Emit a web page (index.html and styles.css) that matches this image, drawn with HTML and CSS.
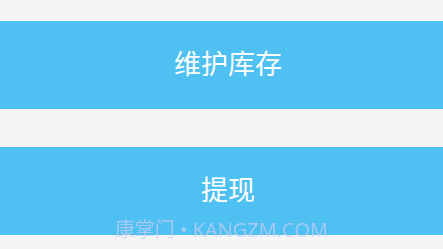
FILE: index.html
```html
<!DOCTYPE html>
<html lang="zh">
<head>
    <meta charset="UTF-8">
    <meta name="viewport" content="width=device-width, initial-scale=1.0">
    <title>维护库存</title>
    <link rel="stylesheet" href="styles.css">
</head>
<body>
    <div class="menu">
        <button class="menu-btn">维护库存</button>
        <button class="menu-btn">提现</button>
    </div>
    <div class="watermark">康掌门 • KANGZM.COM</div>
</body>
</html>
```

FILE: styles.css
```css
body {
    font-family: 'Open Sans', 'Noto Sans CJK SC', sans-serif;
    background-color: #f5f5f5;
    margin: 0;
    padding: 21px 0 0;
}
.menu {
    display: flex;
    flex-direction: column;
    gap: 38px;
}
.menu-btn {
    display: block;
    width: 100%;
    height: 88px;
    padding: 0 0 5px 13px;
    background-color: #4ec0f1;
    color: white;
    border: none;
    font-family: 'Noto Sans CJK SC', sans-serif;
    font-size: 27px;
    cursor: pointer;
}
.watermark {
    position: fixed;
    left: 0;
    right: 0;
    bottom: 9px;
    text-align: center;
    font-size: 20px;
    line-height: 20px;
    color: rgba(205, 205, 245, 0.7);
    pointer-events: none;
}
```
